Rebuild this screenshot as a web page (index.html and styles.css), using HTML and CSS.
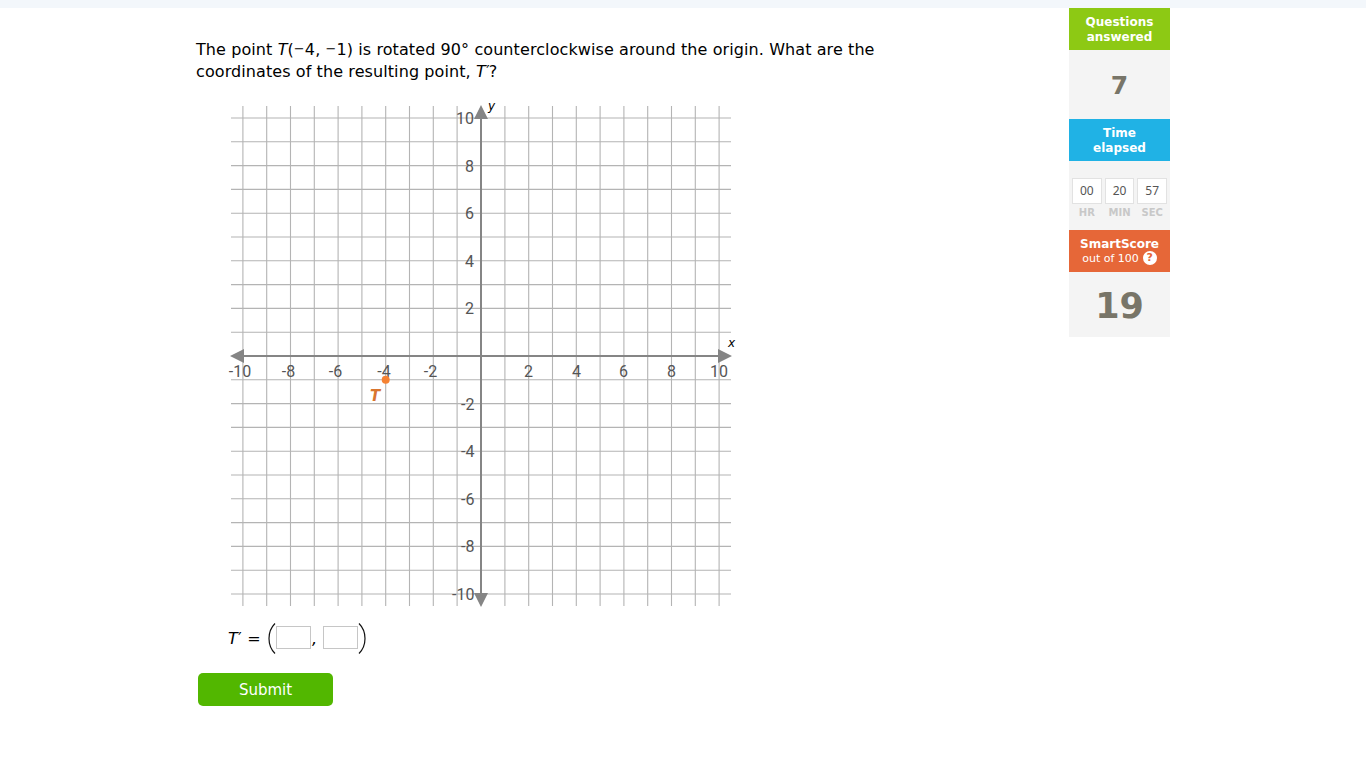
FILE: index.html
```html
<!DOCTYPE html>
<html lang="en">
<head>
    <meta charset="UTF-8">
    <meta name="viewport" content="width=device-width, initial-scale=1.0">
    <title>Rotations: find the coordinates</title>
    <link rel="stylesheet" href="styles.css">
</head>
<body>
    <div class="top-strip"></div>
    <div class="container">
        <main class="question">
            <p class="prompt">
                <span class="prompt-line">The point <i>T</i>(<span class="neg">−</span>4, <span class="neg">−</span>1) is rotated 90° counterclockwise around the origin. What are the</span>
                <span class="prompt-line">coordinates of the resulting point, <i>T</i><span class="prime">′</span>?</span>
            </p>

            <svg class="graph" width="520" height="520" viewBox="221 96 520 520">
                <!-- vertical lines -->
                <path class="grid" d="M242.9 106v500M266.7 106v500M290.5 106v500M314.3 106v500M338.1 106v500M361.9 106v500M385.7 106v500M409.5 106v500M433.3 106v500M457.1 106v500M504.9 106v500M528.7 106v500M552.5 106v500M576.3 106v500M600.1 106v500M623.9 106v500M647.7 106v500M671.5 106v500M695.3 106v500M719.1 106v500"/>
                <!-- horizontal lines -->
                <path class="grid" d="M231 118h500M231 141.8h500M231 165.6h500M231 189.4h500M231 213.2h500M231 237h500M231 260.8h500M231 284.6h500M231 308.4h500M231 332.2h500M231 379.8h500M231 403.6h500M231 427.4h500M231 451.2h500M231 475h500M231 498.8h500M231 522.6h500M231 546.4h500M231 570.2h500M231 594h500"/>
                <path class="axis" d="M240 356h482M481 115v482"/>
                <path class="arrow" d="M230 356l14-7v14zM732 356l-14-7v14zM481 105l-7 14h14zM481 607l-7-14h14z"/>

                <g class="ticks">
                    <text x="240" y="377">-10</text>
                    <text x="288.5" y="377">-8</text>
                    <text x="335.5" y="377">-6</text>
                    <text x="384" y="377">-4</text>
                    <text x="430.5" y="377">-2</text>
                    <text x="528.5" y="377">2</text>
                    <text x="576.5" y="377">4</text>
                    <text x="623.5" y="377">6</text>
                    <text x="671.5" y="377">8</text>
                    <text x="719" y="377">10</text>
                </g>
                <g class="ticks ticks-y">
                    <text x="474" y="124">10</text>
                    <text x="474" y="172">8</text>
                    <text x="474" y="219">6</text>
                    <text x="474" y="267">4</text>
                    <text x="474" y="314">2</text>
                    <text x="474.5" y="410">-2</text>
                    <text x="474.5" y="457">-4</text>
                    <text x="474.5" y="505">-6</text>
                    <text x="474.5" y="552">-8</text>
                    <text x="474.5" y="600">-10</text>
                </g>
                <text class="axis-name" x="488" y="110">y</text>
                <text class="axis-name" x="728" y="347">x</text>

                <circle class="point" cx="385.7" cy="379.8" r="4"/>
                <text class="point-name" x="370" y="401">T</text>
            </svg>

            <div class="answer">
                <span class="answer-name"><i>T</i><span class="prime">′</span> =</span>
                <svg class="paren" width="9" height="32" viewBox="0 0 9 32"><path d="M8 1.5C0 9.5 0 23.5 8 31.5"/></svg>
                <input type="text" class="coord">
                <span class="comma">,</span>
                <input type="text" class="coord">
                <svg class="paren" width="9" height="32" viewBox="0 0 9 32"><path d="M1 1.5C9 9.5 9 23.5 1 31.5"/></svg>
            </div>

            <button class="submit">Submit</button>
        </main>

        <aside class="stats">
            <div class="stat-title green">Questions<br>answered</div>
            <div class="stat-body answered">7</div>
            <div class="stat-title blue">Time<br>elapsed</div>
            <div class="stat-body timer">
                <div class="unit"><span class="digits">00</span><span class="unit-name">HR</span></div>
                <div class="unit"><span class="digits">20</span><span class="unit-name">MIN</span></div>
                <div class="unit"><span class="digits">57</span><span class="unit-name">SEC</span></div>
            </div>
            <div class="stat-title orange">
                SmartScore
                <div class="out-of">out of 100 <span class="help">?</span></div>
            </div>
            <div class="stat-body score">19</div>
        </aside>
    </div>
</body>
</html>
```
FILE: styles.css
```css
* {
    margin: 0;
    padding: 0;
    box-sizing: border-box;
}

body {
    background: #fff;
    color: #000;
    font-family: "DejaVu Sans", Verdana, sans-serif;
    font-size: 16px;
}

.top-strip {
    height: 8px;
    background: #f3f7fb;
}

.container {
    display: flex;
    justify-content: space-between;
    align-items: flex-start;
    width: 974px;
    margin: 0 auto;
}

.question {
    padding-top: 31px;
}

.prompt {
    letter-spacing: 0.09px;
    line-height: 22px;
}

.prompt-line {
    display: block;
    white-space: nowrap;
}

.neg {
    display: inline-block;
    width: 11px;
    font-size: 13px;
    line-height: 1;
    transform: translateY(-2px);
}

.prime {
    display: inline-block;
    width: 3px;
    font-size: 15px;
    line-height: 1;
    text-indent: 0.5px;
}

.graph {
    display: block;
    margin: 13px 0 0 25px;
}

.grid {
    stroke: #b4b4b4;
    stroke-width: 1.1;
}

.axis {
    stroke: #858585;
    stroke-width: 2;
}

.arrow {
    fill: #858585;
}

.ticks {
    font-family: Roboto, sans-serif;
    font-size: 16px;
    fill: #555;
    text-anchor: middle;
}

.ticks-y {
    text-anchor: end;
}

.axis-name {
    font-size: 12px;
    font-style: italic;
}

.point {
    fill: #f58233;
}

.point-name {
    font-size: 15px;
    font-weight: bold;
    font-style: italic;
    fill: #d9752f;
}

.answer {
    display: flex;
    align-items: center;
    height: 32px;
    margin: 6px 0 0 32px;
}

.answer-name {
    width: 39px;
    padding-top: 1px;
    white-space: nowrap;
    word-spacing: 1.5px;
}

.paren {
    fill: none;
    stroke: #111;
    stroke-width: 1.2;
}

.coord {
    width: 35px;
    height: 23px;
    margin-top: -1px;
    border: 1px solid #c6c6c6;
    background: #fff;
}

.comma {
    width: 12px;
    padding-left: 1px;
    font-style: italic;
}

.submit {
    display: block;
    width: 135px;
    height: 33px;
    margin: 19px 0 0 2px;
    border: none;
    border-radius: 5px;
    background: #52b700;
    color: #fff;
    font-family: inherit;
    font-size: 15px;
}

.stats {
    width: 101px;
    text-align: center;
}

.stat-title {
    height: 42px;
    padding-top: 7px;
    color: #fff;
    font-size: 12px;
    font-weight: bold;
    line-height: 15px;
}

.green {
    background: #8dc914;
}

.blue {
    background: #20b2e5;
}

.orange {
    background: #e66738;
}

.stat-body {
    background: #f4f4f4;
    color: #787568;
    font-weight: bold;
}

.answered {
    height: 69px;
    font-size: 25px;
    line-height: 71px;
}

.timer {
    display: flex;
    gap: 3px;
    height: 69px;
    padding: 17px 3px 0;
}

.unit {
    flex: 1;
}

.digits {
    display: block;
    height: 26px;
    border: 1px solid #e2e2e2;
    background: #fff;
    color: #555;
    font-family: "Noto Sans", sans-serif;
    font-size: 12px;
    font-weight: normal;
    line-height: 24px;
}

.unit-name {
    display: block;
    color: #c8c8c8;
    font-size: 10px;
    line-height: 17px;
}

.out-of {
    display: flex;
    justify-content: center;
    align-items: center;
    gap: 4px;
    font-size: 11px;
    font-weight: normal;
    line-height: 14px;
}

.help {
    width: 14px;
    height: 14px;
    margin-top: -2px;
    border-radius: 50%;
    background: #fff;
    color: #e66738;
    font-size: 11px;
    font-weight: bold;
}

.score {
    height: 65px;
    font-size: 35px;
    line-height: 68px;
}
```
